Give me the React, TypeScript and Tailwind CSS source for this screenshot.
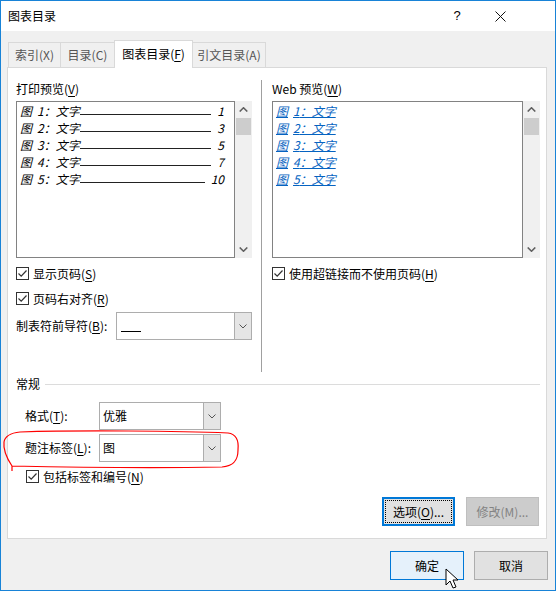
import React from 'react'

type Item = { n: number; page: string }

const items: Item[] = [
  { n: 1, page: '1' },
  { n: 2, page: '3' },
  { n: 3, page: '5' },
  { n: 4, page: '7' },
  { n: 5, page: '10' },
]

function Mn({ children }: { children: React.ReactNode }) {
  return <span className="underline underline-offset-2">{children}</span>
}

function CheckBox({ children }: { children: React.ReactNode }) {
  return (
    <div className="flex items-center h-[17px]">
      <div className="w-[13px] h-[13px] border border-[#333333] bg-white flex items-center justify-center">
        <svg width="11" height="11" viewBox="0 0 11 11">
          <path d="M1.5 5.5 L4.2 8.2 L9.5 2.5" stroke="#333333" strokeWidth="1.2" fill="none" />
        </svg>
      </div>
      <span className="ml-[4px] leading-[17px]">{children}</span>
    </div>
  )
}

function Chevron({ up }: { up?: boolean }) {
  return (
    <svg width="9" height="5" viewBox="0 0 9 5">
      <path
        d={up ? 'M0.7 4.5 L4.5 0.8 L8.3 4.5' : 'M0.7 0.5 L4.5 4.2 L8.3 0.5'}
        stroke="#606060"
        strokeWidth="1.6"
        fill="none"
      />
    </svg>
  )
}

function ScrollBar() {
  return (
    <div className="w-[17px] bg-[#f0f0f0] flex flex-col items-center">
      <div className="h-[17px] flex items-center justify-center">
        <Chevron up />
      </div>
      <div className="w-[15px] h-[17px] bg-[#cdcdcd]" />
      <div className="flex-1" />
      <div className="h-[17px] flex items-center justify-center">
        <Chevron />
      </div>
    </div>
  )
}

function Combo({ width, value }: { width: string; value: React.ReactNode }) {
  return (
    <div className={`${width} h-[28px] border border-[#adadad] bg-white flex`}>
      <div className="flex-1 flex items-center pl-[3px]">{value}</div>
      <div className="w-[17px] bg-[#e5e5e5] border-l border-[#adadad] flex items-center justify-center">
        <svg width="8" height="5" viewBox="0 0 8 5">
          <path d="M0.5 0.5 L4 4 L7.5 0.5" stroke="#555555" strokeWidth="1" fill="none" />
        </svg>
      </div>
    </div>
  )
}

function Caption({ n }: { n: number }) {
  return (
    <span>
      图<span className="ml-[5px]">{n}</span>：文字
    </span>
  )
}

export default function App() {
  return (
    <div className="relative w-[556px] h-[591px] border border-[#1883d7] bg-[#f0f0f0] flex flex-col text-[12px] text-black font-['Noto_Sans_CJK_SC',sans-serif]">
      {/* title bar */}
      <div className="h-[30px] bg-white flex items-center pl-[7px]">
        <span className="text-[12px]">图表目录</span>
        <div className="flex-1" />
        <span className="w-[16px] text-center text-[13px] font-['Liberation_Sans',sans-serif] mr-[30px]">?</span>
        <svg width="11" height="11" viewBox="0 0 11 11" className="mr-[49px]">
          <path d="M0.5 0.5 L10.5 10.5 M10.5 0.5 L0.5 10.5" stroke="#111" strokeWidth="1" fill="none" />
        </svg>
      </div>

      {/* tabs */}
      <div className="mt-[9px] ml-[7px] h-[27px] flex items-end">
        <div className="w-[52px] h-[25px] border-l border-t border-[#d9d9d9] flex items-center justify-center text-[#555]">
          索引(X)
        </div>
        <div className="w-[54px] h-[25px] border-l border-t border-[#d9d9d9] flex items-center justify-center text-[#555]">
          目录(C)
        </div>
        <div className="relative z-10 w-[79px] h-[28px] -mb-px bg-white border-l border-r border-t border-[#d9d9d9] flex items-center justify-center pb-[1px]">
          图表目录(<Mn>F</Mn>)
        </div>
        <div className="w-[73px] h-[25px] border-r border-t border-[#d9d9d9] flex items-center justify-center text-[#555]">
          引文目录(A)
        </div>
      </div>

      {/* panel */}
      <div className="ml-[6px] mr-[8px] h-[472px] bg-white border border-[#d9d9d9] flex flex-col">
        <div className="mt-[12px] h-[292px] flex">
          {/* left column */}
          <div className="ml-[8px] w-[236px] flex flex-col">
            <div className="h-[18px] leading-[18px]">
              打印预览(<Mn>V</Mn>)
            </div>
            <div className="mt-[3px] h-[157px] flex">
              <div className="flex-1 border border-[#828282] pl-[3px] pr-[10px] italic">
                {items.map((it) => (
                  <div key={it.n} className="h-[17px] flex items-end leading-[17px]">
                    <Caption n={it.n} />
                    <div className="flex-1 h-px bg-[#222] mb-[4px]" />
                    <span className="ml-[6px]">{it.page}</span>
                  </div>
                ))}
              </div>
              <ScrollBar />
            </div>
            <div className="mt-[7px]">
              <CheckBox>
                显示页码(<Mn>S</Mn>)
              </CheckBox>
            </div>
            <div className="mt-[8px]">
              <CheckBox>
                页码右对齐(<Mn>R</Mn>)
              </CheckBox>
            </div>
            <div className="mt-[5px] flex items-center">
              <span className="w-[100px]">
                制表符前导符(<Mn>B</Mn>):
              </span>
              <Combo
                width="w-[136px]"
                value={<div className="w-[20px] h-px bg-black mt-[10px] ml-[1px]" />}
              />
            </div>
          </div>

          {/* separator */}
          <div className="ml-[9px] w-px bg-[#a0a0a0]" />

          {/* right column */}
          <div className="ml-[10px] w-[268px] flex flex-col">
            <div className="h-[18px] leading-[18px]">
              Web 预览(<Mn>W</Mn>)
            </div>
            <div className="mt-[3px] h-[157px] flex">
              <div className="flex-1 border border-[#828282] pl-[3px] italic text-[#0563c1]">
                {items.map((it) => (
                  <div key={it.n} className="h-[17px] leading-[17px]">
                    <span className="underline underline-offset-1">
                      <Caption n={it.n} />
                    </span>
                  </div>
                ))}
              </div>
              <ScrollBar />
            </div>
            <div className="mt-[7px]">
              <CheckBox>
                使用超链接而不使用页码(<Mn>H</Mn>)
              </CheckBox>
            </div>
          </div>
        </div>

        {/* 常规 */}
        <div className="mt-[3px] ml-[8px] mr-[6px] h-[18px] flex items-center">
          <span>常规</span>
          <div className="ml-[5px] flex-1 h-px bg-[#dcdcdc]" />
        </div>
        <div className="mt-[9px] ml-[17px] flex items-center">
          <span className="w-[74px]">
            格式(<Mn>T</Mn>):
          </span>
          <Combo width="w-[122px]" value={<span className="text-[12px]">优雅</span>} />
        </div>
        <div className="mt-[4px] ml-[17px] flex items-center">
          <span className="w-[74px]">
            题注标签(<Mn>L</Mn>):
          </span>
          <Combo width="w-[122px]" value={<span className="text-[12px]">图</span>} />
        </div>
        <div className="mt-[6px] ml-[18px]">
          <CheckBox>
            包括标签和编号(<Mn>N</Mn>)
          </CheckBox>
        </div>
        <div className="mt-[12px] mr-[7px] flex justify-end gap-[11px]">
          <div className="w-[73px] h-[29px] border-2 border-[#0078d7] bg-[#e1e1e1] p-[1px]">
            <div className="w-full h-full border border-dotted border-black flex items-center justify-center">
              选项(<Mn>O</Mn>)...
            </div>
          </div>
          <div className="w-[73px] h-[29px] border border-[#bfbfbf] bg-[#cccccc] text-[#838383] flex items-center justify-center">
            修改(M)...
          </div>
        </div>
      </div>

      {/* dialog buttons */}
      <div className="mt-[12px] mr-[7px] flex justify-end gap-[10px]">
        <div className="w-[74px] h-[29px] border border-[#0078d7] bg-[#e5f1fb] flex items-center justify-center">
          确定
        </div>
        <div className="w-[74px] h-[29px] border border-[#adadad] bg-[#e1e1e1] flex items-center justify-center">
          取消
        </div>
      </div>

      {/* red annotation + mouse pointer */}
      <svg className="absolute left-[-1px] top-[-1px] pointer-events-none" width="556" height="591" viewBox="0 0 556 591">
        <path
          d="M12 471 L12 466 C8 460 3 450 4 442 C5 436 10 433 20 432 C80 430 180 431 228 433 C236 434 239 440 238 450 C238 460 234 466 222 467 C160 468 60 467 12 466"
          stroke="#ff0000"
          strokeWidth="1.2"
          fill="none"
        />
        <path
          d="M446 569 L446 585 L450 581 L453 588 L456 587 L453 580 L458 580 Z"
          fill="#ffffff"
          stroke="#000000"
          strokeWidth="1"
          strokeLinejoin="round"
        />
      </svg>
    </div>
  )
}
